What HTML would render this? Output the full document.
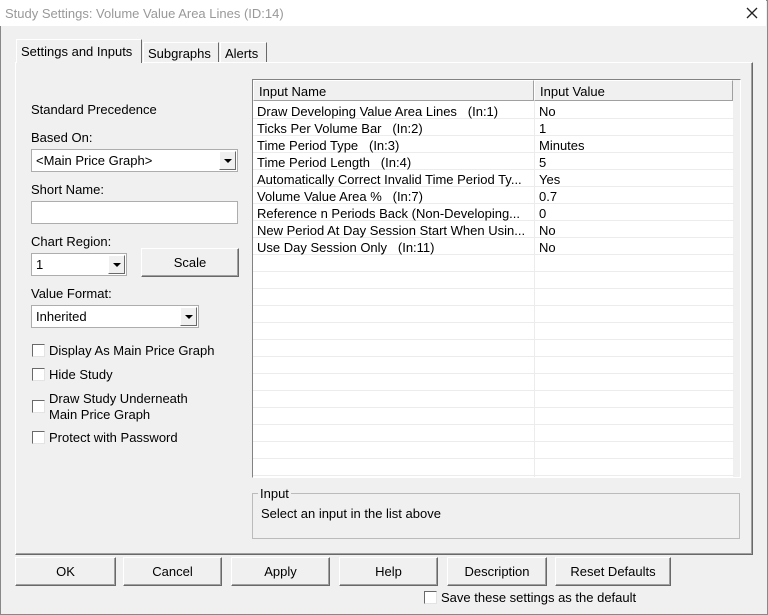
<!DOCTYPE html>
<html><head><meta charset="utf-8"><style>
*{box-sizing:border-box}
body{margin:0;width:768px;height:615px;background:#f0f0f0;font-family:"Liberation Sans",sans-serif;font-size:13px;color:#000;position:relative;overflow:hidden}
.a{position:absolute;white-space:nowrap}
.win{position:absolute;left:0;top:0;width:768px;height:615px;border:1px solid #888}
.title{position:absolute;left:0;top:0;width:766px;height:26px;background:#fff;color:#999;font-size:13px;padding:6px 0 0 5px}
.panel{position:absolute;left:15px;top:62px;width:738px;height:493px;border:1px solid #fff;border-right-color:#696969;border-bottom-color:#696969;box-shadow:inset -1px -1px 0 #a0a0a0}
.tab{position:absolute;border:1px solid #fff;border-bottom:none;border-right-color:#696969;background:#f0f0f0;padding:3px 4px}
.sel{border:1px solid #adadad;background:#fff;height:23px;padding:3px 4px}
.dd{position:absolute;right:1px;top:1px;width:17px;height:19px;background:#f0f0f0;border:1px solid #fff;border-right-color:#696969;border-bottom-color:#696969}
.dd:after{content:"";position:absolute;left:4px;top:7px;border:4px solid transparent;border-top:4px solid #000;border-bottom:none}
.btn{position:absolute;border:1px solid #fff;border-right-color:#696969;border-bottom-color:#696969;box-shadow:inset -1px -1px 0 #a0a0a0;text-align:center;background:#f0f0f0}
.cb{position:absolute;width:13px;height:13px;background:#fff;border:1px solid #696969;border-right-color:#e3e3e3;border-bottom-color:#e3e3e3}
.grid{position:absolute;left:252px;top:79px;width:489px;height:399px;border:1px solid #828282;border-right-color:#fff;border-bottom-color:#fff;background:#fff;overflow:hidden}
.row{position:absolute;left:0;width:481px;height:17px;border-bottom:1px solid #ececec}
.row span{position:absolute;top:2px}
</style></head><body>
<div class="win"></div>
<div class="title">Study Settings: Volume Value Area Lines (ID:14)</div>
<svg class="a" style="left:746px;top:7px" width="12" height="12"><path d="M1 1L11 11M11 1L1 11" stroke="#222" stroke-width="1.3"/></svg>
<div class="panel"></div>
<div class="tab" style="left:16px;top:39px;width:126px;height:24px;padding-top:4px">Settings and Inputs</div>
<div class="tab" style="left:143px;top:42px;width:76px;height:20px">Subgraphs</div>
<div class="tab" style="left:220px;top:42px;width:47px;height:20px">Alerts</div>

<div class="a" style="left:31px;top:102px">Standard Precedence</div>
<div class="a" style="left:31px;top:130px">Based On:</div>
<div class="a sel" style="left:31px;top:149px;width:207px">&lt;Main Price Graph&gt;<div class="dd"></div></div>
<div class="a" style="left:31px;top:182px">Short Name:</div>
<div class="a sel" style="left:31px;top:201px;width:207px"></div>
<div class="a" style="left:31px;top:234px">Chart Region:</div>
<div class="a sel" style="left:31px;top:253px;width:96px">1<div class="dd"></div></div>
<div class="btn" style="left:141px;top:248px;width:98px;height:29px;padding-top:6px">Scale</div>
<div class="a" style="left:31px;top:286px">Value Format:</div>
<div class="a sel" style="left:31px;top:305px;width:168px">Inherited<div class="dd"></div></div>
<div class="cb" style="left:32px;top:344px"></div><div class="a" style="left:49px;top:343px">Display As Main Price Graph</div>
<div class="cb" style="left:32px;top:368px"></div><div class="a" style="left:49px;top:367px">Hide Study</div>
<div class="cb" style="left:32px;top:400px"></div><div class="a" style="left:49px;top:391px;line-height:16px">Draw Study Underneath<br>Main Price Graph</div>
<div class="cb" style="left:32px;top:431px"></div><div class="a" style="left:49px;top:430px">Protect with Password</div>

<div class="grid">
<div class="a" style="left:0;top:0;width:281px;height:21px;border:1px solid #fff;border-right-color:#a0a0a0;border-bottom-color:#a0a0a0;background:#f0f0f0;padding:3px 5px">Input Name</div>
<div class="a" style="left:281px;top:0;width:199px;height:21px;border:1px solid #fff;border-right-color:#a0a0a0;border-bottom-color:#a0a0a0;background:#f0f0f0;padding:3px 5px">Input Value</div>
<div class="a" style="left:480px;top:0;width:9px;height:397px;background:#f0f0f0"></div>
<div class="a" style="left:281px;top:21px;width:1px;height:380px;background:#ececec"></div>
<div class="row" style="top:22px"><span style="left:4px">Draw Developing Value Area Lines&nbsp;&nbsp; (In:1)</span><span style="left:286px">No</span></div>
<div class="row" style="top:39px"><span style="left:4px">Ticks Per Volume Bar&nbsp;&nbsp; (In:2)</span><span style="left:286px">1</span></div>
<div class="row" style="top:56px"><span style="left:4px">Time Period Type&nbsp;&nbsp; (In:3)</span><span style="left:286px">Minutes</span></div>
<div class="row" style="top:73px"><span style="left:4px">Time Period Length&nbsp;&nbsp; (In:4)</span><span style="left:286px">5</span></div>
<div class="row" style="top:90px"><span style="left:4px">Automatically Correct Invalid Time Period Ty...</span><span style="left:286px">Yes</span></div>
<div class="row" style="top:107px"><span style="left:4px">Volume Value Area %&nbsp;&nbsp; (In:7)</span><span style="left:286px">0.7</span></div>
<div class="row" style="top:124px"><span style="left:4px">Reference n Periods Back (Non-Developing...</span><span style="left:286px">0</span></div>
<div class="row" style="top:141px"><span style="left:4px">New Period At Day Session Start When Usin...</span><span style="left:286px">No</span></div>
<div class="row" style="top:158px"><span style="left:4px">Use Day Session Only&nbsp;&nbsp; (In:11)</span><span style="left:286px">No</span></div>
<div class="row" style="top:175px"></div><div class="row" style="top:192px"></div><div class="row" style="top:209px"></div><div class="row" style="top:226px"></div><div class="row" style="top:243px"></div><div class="row" style="top:260px"></div><div class="row" style="top:277px"></div><div class="row" style="top:294px"></div><div class="row" style="top:311px"></div><div class="row" style="top:328px"></div><div class="row" style="top:345px"></div><div class="row" style="top:362px"></div><div class="row" style="top:379px"></div>
</div>

<div class="a" style="left:252px;top:493px;width:488px;height:46px;border:1px solid #bbb"></div>
<div class="a" style="left:258px;top:486px;background:#f0f0f0;padding:0 2px">Input</div>
<div class="a" style="left:261px;top:506px">Select an input in the list above</div>

<div class="btn" style="left:15px;top:557px;width:101px;height:29px;padding-top:6px">OK</div>
<div class="btn" style="left:123px;top:557px;width:99px;height:29px;padding-top:6px">Cancel</div>
<div class="btn" style="left:231px;top:557px;width:99px;height:29px;padding-top:6px">Apply</div>
<div class="btn" style="left:339px;top:557px;width:99px;height:29px;padding-top:6px">Help</div>
<div class="btn" style="left:447px;top:557px;width:100px;height:29px;padding-top:6px">Description</div>
<div class="btn" style="left:555px;top:557px;width:116px;height:29px;padding-top:6px">Reset Defaults</div>
<div class="cb" style="left:424px;top:591px"></div><div class="a" style="left:441px;top:590px">Save these settings as the default</div>
</body></html>
